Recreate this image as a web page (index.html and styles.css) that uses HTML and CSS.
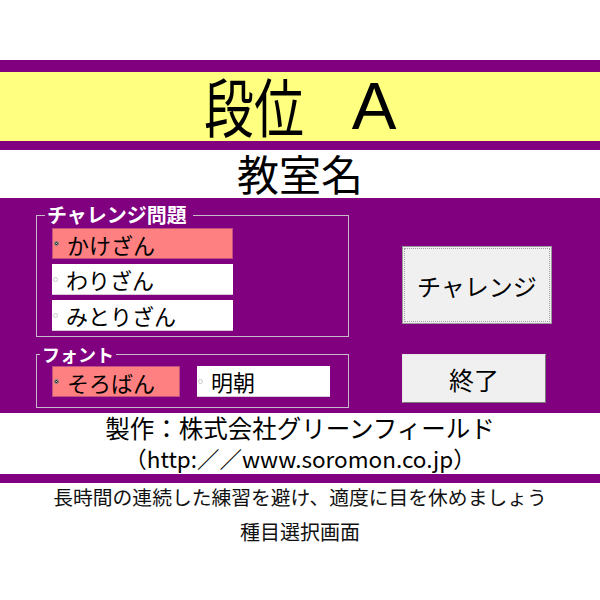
FILE: index.html
```html
<!DOCTYPE html>
<html lang="ja">
<head>
<meta charset="utf-8">
<title>種目選択画面</title>
<link rel="stylesheet" href="styles.css">
</head>
<body>
<div class="top-space"></div>
<div class="bar bar-thick"></div>
<div class="title-band"><h1 class="title"><span class="title-kanji">段位</span><span class="title-letter">A</span></h1></div>
<div class="bar bar-thin"></div>
<div class="classroom">教室名</div>
<div class="main">
  <div class="left">
    <fieldset class="group group-problem">
      <legend>チャレンジ問題</legend>
      <div class="opts">
        <div class="opt opt-wide selected"><span class="dot"></span><span class="opt-text">かけざん</span></div>
        <div class="opt opt-wide"><span class="dot"></span><span class="opt-text">わりざん</span></div>
        <div class="opt opt-wide"><span class="dot"></span><span class="opt-text">みとりざん</span></div>
      </div>
    </fieldset>
    <fieldset class="group group-font">
      <legend>フォント</legend>
      <div class="opts font-row">
        <div class="opt opt-soroban selected"><span class="dot"></span><span class="opt-text">そろばん</span></div>
        <div class="opt opt-mincho"><span class="dot"></span><span class="opt-text">明朝</span></div>
      </div>
    </fieldset>
  </div>
  <div class="right">
    <button class="btn btn-challenge" type="button">チャレンジ</button>
    <button class="btn btn-exit" type="button">終了</button>
  </div>
</div>
<div class="credit">
  <div class="maker">製作：株式会社グリーンフィールド</div>
  <div class="url">（http:／／www.soromon.co.jp）</div>
</div>
<div class="bar bar-thin"></div>
<div class="notes">
  <div class="note">長時間の連続した練習を避け、適度に目を休めましょう</div>
  <div class="screen-name">種目選択画面</div>
</div>
</body>
</html>
```

FILE: styles.css
```css
html, body {
  margin: 0;
  padding: 0;
  background: #ffffff;
}

body {
  width: 600px;
  font-family: "Noto Sans CJK JP", "Noto Sans", sans-serif;
  color: #000000;
}

.top-space {
  height: 60px;
}

.bar {
  background: #800080;
}

.bar-thick {
  height: 12px;
}

.bar-thin {
  height: 9px;
}

.title-band {
  height: 69px;
  background: #ffff80;
  display: flex;
  justify-content: center;
  align-items: center;
}

.title {
  margin: 0;
  font-weight: 400;
  display: flex;
  align-items: center;
  height: 69px;
  white-space: nowrap;
}

.title-kanji {
  display: inline-block;
  width: 100px;
  font-size: 64px;
  line-height: 69px;
  transform: scaleX(0.78);
  transform-origin: left center;
  margin-top: -4px;
}

.title-letter {
  display: inline-block;
  margin-left: 48px;
  font-family: "Liberation Sans", "Noto Sans", sans-serif;
  font-size: 67px;
  line-height: 69px;
  margin-top: -2px;
}

.classroom {
  height: 48px;
  line-height: 46px;
  font-size: 42px;
  text-align: center;
}

.main {
  height: 215px;
  box-sizing: border-box;
  background: #800080;
  padding: 7px 0 0 36px;
  display: flex;
}

.left {
  width: 313px;
  display: flex;
  flex-direction: column;
}

.group {
  margin: 0;
  padding: 0;
  border: 1px solid #c8b8c8;
  width: 313px;
  box-sizing: border-box;
  min-width: 0;
}

.group legend {
  color: #ffffff;
  font-size: 19px;
  font-weight: 700;
  line-height: 20px;
  padding: 0 6px 0 2px;
}

.group-problem legend {
  margin-left: 8px;
  font-size: 20px;
}

.group-font {
  margin-top: 7px;
}

.group-font legend {
  margin-left: 3px;
  padding-left: 2px;
  padding-right: 2px;
  font-size: 18px;
}

.opts {
  padding-left: 15px;
  display: flex;
  flex-direction: column;
  gap: 5px;
}

.group-problem .opts {
  padding-top: 3px;
  padding-bottom: 5px;
}

.group-font .opts {
  padding-top: 2px;
  padding-bottom: 10px;
}

.font-row {
  flex-direction: row;
  gap: 17px;
}

.opt {
  height: 31px;
  box-sizing: border-box;
  background: #ffffff;
  display: flex;
  align-items: center;
  border-bottom: 1px solid #d8c8d8;
}

.opt.selected {
  background: #ff8080;
  border: 1px solid #c05080;
}

.opt-wide {
  width: 181px;
}

.opt-soroban {
  width: 128px;
}

.opt-mincho {
  width: 133px;
}

.dot {
  width: 5px;
  height: 5px;
  box-sizing: border-box;
  border-radius: 50%;
  border: 1px solid #c8c8c8;
  background: #ffffff;
  margin-left: 1px;
  flex: none;
}

.opt.selected .dot {
  border-color: #707070;
  box-shadow: inset 0 0 0 1px #202020;
}

.opt-text {
  font-size: 22px;
  line-height: 28px;
  margin-left: 8px;
  white-space: nowrap;
}

.right {
  margin-left: 53px;
  display: flex;
  flex-direction: column;
  align-items: flex-start;
}

.btn {
  font-family: "Noto Sans CJK JP", "Noto Sans", sans-serif;
  background: #f0f0f0;
  color: #000000;
  padding: 0;
  margin: 0;
  cursor: default;
}

.btn-challenge {
  width: 150px;
  height: 78px;
  margin-top: 41px;
  font-size: 24px;
  border: 1px solid #9a9a9a;
  outline: 1px dotted #a0a0a0;
  outline-offset: -3px;
}

.btn-exit {
  width: 144px;
  height: 49px;
  margin-top: 30px;
  font-size: 25px;
  border: 1px solid;
  border-color: #e8e8e8 #7a7a7a #7a7a7a #e8e8e8;
}

.credit {
  height: 61px;
  text-align: center;
}

.maker {
  font-size: 24.5px;
  line-height: 30px;
}

.url {
  font-size: 22.5px;
  line-height: 30px;
}

.notes {
  text-align: center;
  color: #111111;
}

.note {
  font-size: 19.8px;
  line-height: 28px;
}

.screen-name {
  font-size: 20px;
  line-height: 28px;
  margin-top: 7px;
}
```
